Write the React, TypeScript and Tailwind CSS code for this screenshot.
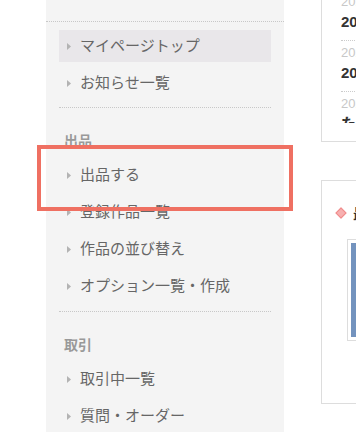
import React from 'react';

type Item = { label: string; active?: boolean };

const groups: { title?: string; items: Item[] }[] = [
  { items: [{ label: 'マイページトップ', active: true }, { label: 'お知らせ一覧' }] },
  { title: '出品', items: [{ label: '出品する' }, { label: '登録作品一覧' }, { label: '作品の並び替え' }, { label: 'オプション一覧・作成' }] },
  { title: '取引', items: [{ label: '取引中一覧' }, { label: '質問・オーダー' }] },
];

const news = [
  { date: '2020.09.14', title: '2020年秋の新作特集' },
  { date: '2020.08.27', title: '2020年夏の販売実績' },
  { date: '2020.08.03', title: 'たくさんのご応募ありがとうございました' },
];

const jp = { fontFamily: '"Noto Sans CJK JP", "Noto Sans", sans-serif' };
const latin = { fontFamily: '"Liberation Sans", "Noto Sans CJK JP", sans-serif' };

const Marker = () => (
  <svg width="4" height="7" viewBox="0 0 4 7" className="shrink-0">
    <polygon points="0,0 4,3.5 0,7" fill="#b3b3b3" />
  </svg>
);

const MenuItem: React.FC<{ item: Item }> = ({ item }) => (
  <li
    className={`flex h-[32px] items-center pl-[8px] ${item.active ? 'bg-[#e9e7ea]' : ''}`}
  >
    <Marker />
    <span className="mb-[3px] ml-[9px] text-[15px] leading-none text-[#666]">{item.label}</span>
  </li>
);

export default function App() {
  return (
    <div className="relative flex h-[432px] w-[356px] overflow-hidden bg-white" style={jp}>
      {/* sidebar */}
      <aside className="ml-[46px] w-[238px] shrink-0 bg-[#f4f4f4]">
        <div className="h-[22px] border-b border-dotted border-[#c8c8c8]" />
        <div className="px-[13px]">
          <ul className="mt-[8px] flex flex-col gap-[5px]">
            {groups[0].items.map(i => <MenuItem key={i.label} item={i} />)}
          </ul>
          <div className="mt-[8px] border-b border-dotted border-[#c8c8c8]" />

          <h3 className="mt-[22px] pl-[5px] text-[14px] font-bold leading-[20px] text-[#999]">{groups[1].title}</h3>
          <ul className="mt-[9px] flex flex-col gap-[5px]">
            {groups[1].items.map(i => <MenuItem key={i.label} item={i} />)}
          </ul>
          <div className="mt-[9px] border-b border-dotted border-[#c8c8c8]" />

          <h3 className="mt-[22px] pl-[5px] text-[14px] font-bold leading-[20px] text-[#999]">{groups[2].title}</h3>
          <ul className="mt-[9px] flex flex-col gap-[5px]">
            {groups[2].items.map(i => <MenuItem key={i.label} item={i} />)}
          </ul>
        </div>
      </aside>

      {/* main column */}
      <main className="ml-[37px] w-[300px] shrink-0">
        <section className="border-b border-l border-[#ddd] pb-[18px] pl-[19px]">
          <ul className="h-[123px] overflow-hidden">
            <div className="-mt-[10px]">
              {news.map(n => (
                <li key={n.date} className="whitespace-nowrap border-b border-dotted border-[#ccc] pb-[6px] pt-[4px]">
                  <p className="text-[13px] leading-[16px] text-[#c8c8c8]" style={latin}>{n.date}</p>
                  <p className="text-[15px] font-bold leading-[24px] text-[#333]" style={latin}>{n.title}</p>
                </li>
              ))}
            </div>
          </ul>
        </section>

        <section className="mt-[38px] border border-r-0 border-[#ddd] pb-[62px] pl-[14px] pt-[25px]">
          <div className="flex h-[14px] items-center">
            <span className="ml-[1px] h-[8px] w-[8px] rotate-45 border border-[#f08a8a] bg-[#f7b0b0]" />
            <span className="ml-[8px] whitespace-nowrap text-[14px] font-bold leading-none text-[#333]">最近の取引状況</span>
          </div>
          <div className="ml-[11px] mt-[19px] border border-[#ddd] p-[3px]">
            <div className="h-[94px] bg-[#7393be]" />
          </div>
        </section>
      </main>

      {/* highlight annotation */}
      <div className="absolute left-[37px] top-[145px] h-[66px] w-[256px] border-4 border-[#ef7062]" />
    </div>
  );
}
